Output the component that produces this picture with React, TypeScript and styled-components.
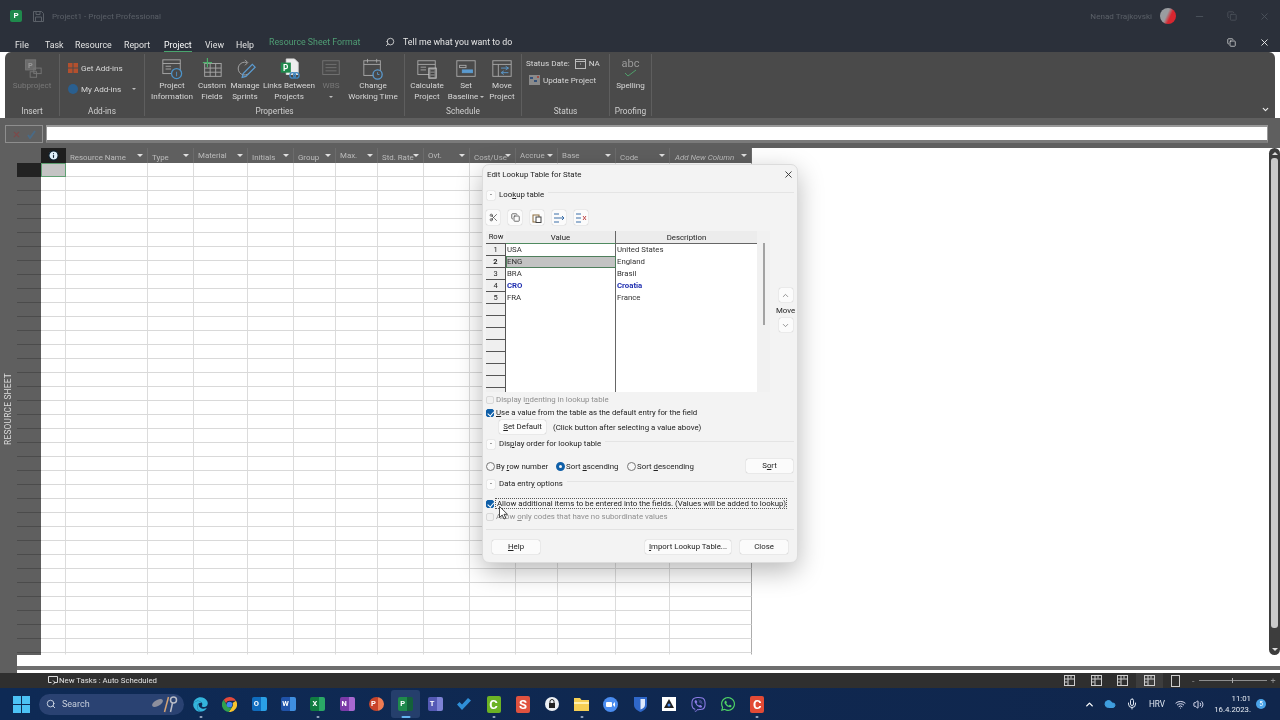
import { ReactNode } from 'react';
import styled, { createGlobalStyle } from 'styled-components';
import { FaEdge, FaViber, FaWhatsapp } from 'react-icons/fa';
import {
  ChevronDown,
  ChevronUp,
  Cloud,
  Copy,
  Info,
  Mic,
  Minus,
  Scissors,
  Search,
  Volume2,
  Wifi,
  X,
} from 'lucide-react';

const GlobalStyle = createGlobalStyle`
  html, body { margin: 0; padding: 0; background: #fff; }
  * { box-sizing: border-box; }
  body { font-family: Roboto, "Liberation Sans", Arial, sans-serif; }
`;

const columns = [
  { w: 82, label: 'Resource Name', x: 4 },
  { w: 46, label: 'Type', x: 4 },
  { w: 54, label: 'Material', x: 4, top: true },
  { w: 46, label: 'Initials', x: 4 },
  { w: 42, label: 'Group', x: 4 },
  { w: 42, label: 'Max.', x: 4, top: true },
  { w: 46, label: 'Std. Rate', x: 4 },
  { w: 46, label: 'Ovt.', x: 4, top: true },
  { w: 46, label: 'Cost/Use', x: 4 },
  { w: 42, label: 'Accrue', x: 4, top: true },
  { w: 58, label: 'Base', x: 4, top: true },
  { w: 54, label: 'Code', x: 4 },
  { w: 82, label: 'Add New Column', x: 5, italic: true },
];

const lookups = [
  { row: '1', value: 'USA', text: 'United States' },
  { row: '2', value: 'ENG', text: 'England', active: true },
  { row: '3', value: 'BRA', text: 'Brasil' },
  { row: '4', value: 'CRO', text: 'Croatia', changed: true },
  { row: '5', value: 'FRA', text: 'France' },
  ...Array.from({ length: 8 }, () => ({ row: '', value: '', text: '' })),
];

const menus = [
  { label: 'File', w: 30 },
  { label: 'Task', w: 30 },
  { label: 'Resource', w: 49 },
  { label: 'Report', w: 40 },
  { label: 'Project', w: 41 },
  { label: 'View', w: 31 },
  { label: 'Help', w: 33 },
];

const LargeIcon = ({ kind }: { kind: string }) => {
  const s = '#a9a9a9';
  return (
    <svg width="22" height="22" viewBox="0 0 24 24" fill="none" stroke={s} strokeWidth="1">
      {kind === 'sub' && (
        <>
          <rect x="5" y="2" width="11" height="11" fill="#6b6b6b" stroke="#777" />
          <text x="7.5" y="11" fontSize="8" fontWeight="700" fill="#999" stroke="none">P</text>
          <rect x="14" y="11" width="8" height="6" stroke="#777" />
          <rect x="10" y="15" width="7" height="6" stroke="#777" />
        </>
      )}
      {kind === 'info' && (
        <>
          <rect x="2" y="2" width="19" height="15" />
          <path d="M2 6h19M5 9h6M5 12h6" />
          <circle cx="17" cy="17" r="5.5" fill="#484848" stroke="#4d93c8" strokeWidth="1.4" />
          <path d="M17 15v5" stroke="#4d93c8" />
        </>
      )}
      {kind === 'fields' && (
        <>
          <rect x="4" y="6" width="18" height="14" />
          <path d="M4 11h18M4 15.500h18M10 6v14M16 6v14" />
          <path d="M7 0v10M2 5h10" stroke="#4caf6a" strokeWidth="1.3" />
        </>
      )}
      {kind === 'sprints' && (
        <>
          <path d="M14 5a7 7 0 1 0 3 11" />
          <path d="M12 2l3 3-3 3" />
          <path d="M9 21l1-4L20 7l3 3-10 10z" stroke="#5b9bd0" strokeWidth="1.4" />
        </>
      )}
      {kind === 'links' && (
        <>
          <path d="M9 1h9l4 4v13H9z" fill="#eee" stroke="#ddd" />
          <rect x="3" y="5" width="11" height="11" fill="#1f8a4c" stroke="none" />
          <text x="5.500" y="14" fontSize="9" fontWeight="700" fill="#fff" stroke="none">P</text>
          <circle cx="16" cy="19" r="3" stroke="#3f84bd" strokeWidth="1.5" />
          <circle cx="20" cy="19" r="3" stroke="#3f84bd" strokeWidth="1.5" />
        </>
      )}
      {kind === 'wbs' && (
        <>
          <rect x="3" y="3" width="18" height="15" stroke="#737373" />
          <path d="M6 7h12M6 10.500h12M6 14h12" stroke="#737373" />
        </>
      )}
      {kind === 'time' && (
        <>
          <rect x="2" y="3" width="18" height="16" />
          <path d="M2 7h18M6 1v4M16 1v4" />
          <circle cx="17" cy="18" r="5" fill="#484848" stroke="#5b9bd0" strokeWidth="1.4" />
          <path d="M17 15.500V18h2" stroke="#5b9bd0" />
        </>
      )}
      {kind === 'calc' && (
        <>
          <rect x="2" y="3" width="19" height="15" />
          <path d="M2 7h19M5 10h6M5 13h6" />
          <rect x="14" y="11" width="8" height="11" fill="#777" stroke="#ccc" />
          <path d="M16 14h4M16 17h4M16 20h4" stroke="#333" />
        </>
      )}
      {kind === 'baseline' && (
        <>
          <rect x="2" y="3" width="20" height="17" />
          <rect x="5" y="8" width="7" height="2.500" />
          <rect x="8" y="13" width="11" height="3" fill="#5b9bd0" stroke="#5b9bd0" />
        </>
      )}
      {kind === 'move' && (
        <>
          <rect x="2" y="3" width="20" height="17" />
          <path d="M2 7h20M8 7v13" />
          <path d="M11 11h8M16 9l3 2-3 2" stroke="#5b9bd0" />
          <path d="M19 16h-7M14 14l-3 2 3 2" stroke="#5b9bd0" />
        </>
      )}
    </svg>
  );
};

const Mnemonic = styled.u`
  text-decoration-thickness: 1px;
`;

const SectionTitle = ({ children }: { children: ReactNode }) => (
  <SectionHead>
    <Collapse>-</Collapse>
    <SectionLabel>{children}</SectionLabel>
    <SectionRule />
  </SectionHead>
);

const App = () => {
  return (
    <Page>
      <GlobalStyle />
      <TitleBar>
        <AppLogo>P</AppLogo>
        <svg width="11" height="11" viewBox="0 0 11 11" fill="none" stroke="#5b6068">
          <path d="M.5.5h8l2 2v8H.5z" />
          <path d="M3 .5v3h4v-3M2.500 10.500V6h6v4.500" />
        </svg>
        <TitleText>Project1 - Project Professional</TitleText>
        <TitleSpacer />
        <TitleText>Nenad Trajkovski</TitleText>
        <Avatar />
        <WindowIcons>
          <Minus size={11} color="#4d535c" />
          <Copy size={10} color="#4d535c" />
          <X size={11} color="#4d535c" />
        </WindowIcons>
      </TitleBar>

      <MenuBar>
        {menus.map((m) => (
          <MenuItem key={m.label} $w={m.w}>
            <MenuLabel $active={m.label === 'Project'}>{m.label}</MenuLabel>
          </MenuItem>
        ))}
        <ContextTab>Resource Sheet Format</ContextTab>
        <Search size={10} color="#ddd" style={{ transform: 'scaleX(-1)' }} />
        <TellMe>Tell me what you want to do</TellMe>
        <TitleSpacer />
        <Copy size={9} color="#ddd" />
        <X size={11} color="#eee" style={{ marginLeft: 23, marginRight: 10 }} />
      </MenuBar>

      <Ribbon>
        <Group $w={55}>
          <GroupBody>
            <LargeButton $w={54} $off>
              <LargeIcon kind="sub" />
              <span>Subproject</span>
            </LargeButton>
          </GroupBody>
          <GroupLabel>Insert</GroupLabel>
        </Group>
        <Group $w={85}>
          <GroupStack $pad={8} $top={6}>
            <SmallButton>
              <svg width="10" height="10" viewBox="0 0 10 10">
                <path d="M0 0h4.500v4.500H0zM5.500 0H10v4.500H5.500zM0 5.500h4.500V10H0zM5.500 5.500H10V10H5.500z" fill="#b3502e" />
              </svg>
              <span>Get Add-ins</span>
            </SmallButton>
            <SmallButton>
              <svg width="10" height="10" viewBox="0 0 10 10">
                <circle cx="5" cy="5" r="5" fill="#2a5f8f" />
              </svg>
              <span>My Add-ins</span>
              <Caret $gap={8} />
            </SmallButton>
          </GroupStack>
          <GroupLabel>Add-ins</GroupLabel>
        </Group>
        <Group $w={260}>
          <GroupBody $pad={4}>
            <LargeButton $w={46}>
              <LargeIcon kind="info" />
              <span>
                Project
                <br />
                Information
              </span>
            </LargeButton>
            <LargeButton $w={34}>
              <LargeIcon kind="fields" />
              <span>
                Custom
                <br />
                Fields
              </span>
            </LargeButton>
            <LargeButton $w={32}>
              <LargeIcon kind="sprints" />
              <span>
                Manage
                <br />
                Sprints
              </span>
            </LargeButton>
            <LargeButton $w={56}>
              <LargeIcon kind="links" />
              <span>
                Links Between
                <br />
                Projects
              </span>
            </LargeButton>
            <LargeButton $w={28} $off>
              <LargeIcon kind="wbs" />
              <span>WBS</span>
              <Caret $below />
            </LargeButton>
            <LargeButton $w={56}>
              <LargeIcon kind="time" />
              <span>
                Change
                <br />
                Working Time
              </span>
            </LargeButton>
          </GroupBody>
          <GroupLabel>Properties</GroupLabel>
        </Group>
        <Group $w={117}>
          <GroupBody>
            <LargeButton $w={44}>
              <LargeIcon kind="calc" />
              <span>
                Calculate
                <br />
                Project
              </span>
            </LargeButton>
            <LargeButton $w={34}>
              <LargeIcon kind="baseline" />
              <span>
                Set
                <br />
                Baseline&nbsp;<Caret $inline />
              </span>
            </LargeButton>
            <LargeButton $w={38}>
              <LargeIcon kind="move" />
              <span>
                Move
                <br />
                Project
              </span>
            </LargeButton>
          </GroupBody>
          <GroupLabel>Schedule</GroupLabel>
        </Group>
        <Group $w={88}>
          <GroupStack $pad={4} $top={1}>
            <SmallButton>
              <span>Status Date:</span>
              <svg width="11" height="11" viewBox="0 0 11 11" fill="none" stroke="#bbb" style={{ marginLeft: 2 }}>
                <rect x=".5" y="1.500" width="10" height="9" />
                <path d="M.5 3.500h10M5 6h1" />
              </svg>
              <span>NA</span>
            </SmallButton>
            <SmallButton $top={-4} $x={3}>
              <svg width="11" height="10" viewBox="0 0 11 10">
                <rect width="11" height="10" fill="#8b8b8b" />
                <path d="M1 2h3v2H1zM5 5h3v2H5z" fill="#35527a" />
                <path d="M8 1h2v2H8z" fill="#a14e45" />
              </svg>
              <span>Update Project</span>
            </SmallButton>
          </GroupStack>
          <GroupLabel>Status</GroupLabel>
        </Group>
        <Group $w={42}>
          <GroupBody>
            <LargeButton $w={41}>
              <AbcMark>abc</AbcMark>
              <SpellTick width="14" height="8" viewBox="0 0 14 8" fill="none" stroke="#4fa06a">
                <path d="M1 4l3 3 8-6" />
              </SpellTick>
              <span>Spelling</span>
            </LargeButton>
          </GroupBody>
          <GroupLabel>Proofing</GroupLabel>
        </Group>
        <RibbonCollapse>
          <ChevronDown size={9} color="#eee" strokeWidth={3} />
        </RibbonCollapse>
      </Ribbon>

      <FormulaBar>
        <EntryButtons>
          <X size={9} color="#7d4a4a" strokeWidth={3} />
          <svg width="9" height="9" viewBox="0 0 9 9" fill="none" stroke="#4a6a85" strokeWidth="2">
            <path d="M1 5l2 3 5-7" />
          </svg>
        </EntryButtons>
        <EntryInput />
      </FormulaBar>

      <Sheet>
        <SheetLabel>RESOURCE SHEET</SheetLabel>
        <SheetMain>
          <GridArea>
            <HeaderRow>
              <Gutter />
              <IndicatorHead>
                <Info size={11} color="#0d2130" fill="#dff0fb" strokeWidth={2.4} />
              </IndicatorHead>
              {columns.map((c) => (
                <HeaderCell key={c.label} $w={c.w} $top={c.top} $x={c.x} $italic={c.italic}>
                  <HeaderText>{c.label}</HeaderText>
                  <HeaderArrow />
                </HeaderCell>
              ))}
            </HeaderRow>
            {Array.from({ length: 36 }, (_, r) => (
              <GridRow key={r} $short={r === 35}>
                <RowGutter>
                  <RowMark $on={r === 0} $hidden={r === 35} />
                </RowGutter>
                <GridCell $w={25} $selected={r === 0} $noLine={r === 35} />
                {columns.map((c) => (
                  <GridCell key={c.label} $w={c.w} $noLine={r === 35} $edge={c.italic} />
                ))}
              </GridRow>
            ))}
            <SheetFoot />
          </GridArea>
          <ScrollBar>
            <ScrollArrow $up />
            <ScrollThumb />
            <ScrollArrow />
          </ScrollBar>
        </SheetMain>
      </Sheet>

      <HorizontalBar />

      <StatusBar>
        <svg width="10" height="9" viewBox="0 0 10 9" fill="none" stroke="#ddd">
          <path d="M.5.500h9v6H6M.5.500v6h3" />
          <path d="M5 4.500l2 2-2 2" />
        </svg>
        <StatusText>New Tasks : Auto Scheduled</StatusText>
        <TitleSpacer />
        {[0, 1, 2, 3].map((i) => (
          <ViewIcon key={i} $on={i === 3}>
            <svg width="11" height="11" viewBox="0 0 11 11" fill="none" stroke="#cfcfcf">
              <rect x=".5" y=".5" width="10" height="10" />
              <path d="M.5 4h10M4 .5v10M7 .5v3M.5 7h3" />
            </svg>
          </ViewIcon>
        ))}
        <ViewIcon>
          <svg width="9" height="12" viewBox="0 0 9 12" fill="none" stroke="#cfcfcf">
            <rect x=".5" y=".5" width="8" height="11" />
          </svg>
        </ViewIcon>
        <ZoomSlider>
          <ZoomGlyph>-</ZoomGlyph>
          <ZoomTrack>
            <ZoomTick />
          </ZoomTrack>
          <ZoomGlyph>+</ZoomGlyph>
        </ZoomSlider>
      </StatusBar>

      <Taskbar>
        <StartButton>
          <svg width="17" height="17" viewBox="0 0 17 17">
            <path d="M0 0h8v8H0zM9 0h8v8H9zM0 9h8v8H0zM9 9h8v8H9z" fill="#4cc2f5" />
          </svg>
        </StartButton>
        <SearchPill>
          <Search size={10} color="#dfe6f0" />
          <SearchText>Search</SearchText>
          <TitleSpacer />
          <svg width="31" height="18" viewBox="0 0 26 18" fill="none">
            <ellipse cx="6" cy="8" rx="6" ry="3" fill="#8d8f9d" transform="rotate(-30 6 8)" />
            <path d="M13 17L17 2" stroke="#d6a475" strokeWidth="1.5" />
            <circle cx="22" cy="5" r="3" stroke="#b9bcc7" strokeWidth="1.5" />
            <path d="M21 8l-2 9" stroke="#b9bcc7" strokeWidth="1.5" />
          </svg>
        </SearchPill>
        <TaskIcons>
          <TaskSlot $dot>
            <FaEdge size={15} color="#33b5dc" />
          </TaskSlot>
          <TaskSlot>
            <svg width="15" height="15" viewBox="0 0 20 20">
              <path d="M10 0a10 10 0 0 1 8.660 5H10a5 5 0 0 0-4.700 3.300L2.300 3.500A10 10 0 0 1 10 0z" fill="#e2493b" />
              <path d="M18.660 5A10 10 0 0 1 9 20l4.300-6.500A5 5 0 0 0 14 8z" fill="#f7c32e" />
              <path d="M9 20A10 10 0 0 1 2.300 3.500L6 10a5 5 0 0 0 7.300 3.500z" fill="#2fa14f" />
              <circle cx="10" cy="10" r="3.800" fill="#4285f4" />
            </svg>
          </TaskSlot>
          <TaskSlot>
            <AppTile $bg="#0f6cbd" $accent="#2aa0e6">O</AppTile>
          </TaskSlot>
          <TaskSlot>
            <AppTile $bg="#1f52a8" $accent="#3f8fe0">W</AppTile>
          </TaskSlot>
          <TaskSlot $dot>
            <AppTile $bg="#107c41" $accent="#2aa866">X</AppTile>
          </TaskSlot>
          <TaskSlot>
            <AppTile $bg="#7b3aa8" $accent="#a868d0">N</AppTile>
          </TaskSlot>
          <TaskSlot>
            <AppTile $bg="#c8442a" $accent="#ee7b52" $round>P</AppTile>
          </TaskSlot>
          <TaskSlot $active>
            <AppTile $bg="#1f8a4c" $accent="#14613a">P</AppTile>
          </TaskSlot>
          <TaskSlot>
            <AppTile $bg="#5459b5" $accent="#7d82d6">T</AppTile>
          </TaskSlot>
          <TaskSlot>
            <svg width="14" height="12" viewBox="0 0 14 12">
              <path d="M0 6.500L2.500 4l2.500 2.500L11 0l3 2.500L5 12z" fill="#2f8fd8" />
            </svg>
          </TaskSlot>
          <TaskSlot $dot>
            <LetterBadge $bg="#6cb324">C</LetterBadge>
          </TaskSlot>
          <TaskSlot>
            <LetterBadge $bg="#e0523f">S</LetterBadge>
          </TaskSlot>
          <TaskSlot>
            <svg width="14" height="14" viewBox="0 0 14 14">
              <circle cx="7" cy="7" r="7" fill="#edf0f4" />
              <rect x="4" y="6" width="6" height="5" fill="#222" />
              <path d="M5 6V4.500a2 2 0 0 1 4 0V6" fill="none" stroke="#222" />
            </svg>
          </TaskSlot>
          <TaskSlot $dot>
            <svg width="15" height="13" viewBox="0 0 15 13">
              <path d="M0 0h6l1.500 2H15v11H0z" fill="#f6cf54" />
              <path d="M0 4h15v2H0z" fill="#fff0b0" />
            </svg>
          </TaskSlot>
          <TaskSlot>
            <svg width="15" height="15" viewBox="0 0 15 15">
              <circle cx="7.500" cy="7.500" r="7.500" fill="#4a8cf0" />
              <rect x="3" y="5" width="6" height="5" rx="1" fill="#fff" />
              <path d="M10 7l2-2v5l-2-2z" fill="#fff" />
            </svg>
          </TaskSlot>
          <TaskSlot>
            <svg width="13" height="15" viewBox="0 0 13 15">
              <path d="M0 0h13v8c0 3.500-3 5.500-6.500 7C3 13.500 0 11.500 0 8z" fill="#2f67c9" />
              <path d="M6.500 2H11v6c0 2-2 3.500-4.500 4.500z" fill="#dfe9fb" />
            </svg>
          </TaskSlot>
          <TaskSlot>
            <svg width="14" height="14" viewBox="0 0 14 14">
              <rect width="14" height="14" fill="#fff" />
              <path d="M7 2l5 9H2z" fill="#222" />
              <circle cx="7" cy="8" r="1.500" fill="#4a8cf0" />
            </svg>
          </TaskSlot>
          <TaskSlot>
            <FaViber size={15} color="#8c7ce6" />
          </TaskSlot>
          <TaskSlot>
            <FaWhatsapp size={16} color="#4fd465" />
          </TaskSlot>
          <TaskSlot $dot>
            <LetterBadge $bg="#e24a35">C</LetterBadge>
          </TaskSlot>
        </TaskIcons>
        <TitleSpacer />
        <Tray>
          <TraySlot $w={22}>
            <ChevronUp size={11} color="#fff" strokeWidth={3} />
          </TraySlot>
          <TraySlot $w={20}>
            <Cloud size={12} color="#3f9ede" fill="#3f9ede" />
          </TraySlot>
          <TraySlot $w={24}>
            <Mic size={12} color="#dfe6f0" />
          </TraySlot>
          <TraySlot $w={26}>HRV</TraySlot>
          <TraySlot $w={20}>
            <Wifi size={11} color="#eef" />
          </TraySlot>
          <TraySlot $w={16}>
            <Volume2 size={11} color="#eef" />
          </TraySlot>
          <Clock>
            <span>11:01</span>
            <span>16.4.2023.</span>
          </Clock>
          <Badge>5</Badge>
        </Tray>
      </Taskbar>

      <Dialog>
        <DialogTitle>
          <span>Edit Lookup Table for State</span>
          <X size={11} color="#333" />
        </DialogTitle>
        <SectionTitle>
          Loo<Mnemonic>k</Mnemonic>up table
        </SectionTitle>
        <ToolRow>
          <ToolButton>
            <Scissors size={9} color="#444" />
          </ToolButton>
          <ToolButton>
            <Copy size={9} color="#444" />
          </ToolButton>
          <ToolButton>
            <svg width="10" height="10" viewBox="0 0 10 10" fill="none" stroke="#8a6a3a">
              <rect x="1" y="2" width="6" height="7" />
              <rect x="4" y="4" width="5" height="5.500" stroke="#444" fill="#fff" />
            </svg>
          </ToolButton>
          <ToolButton>
            <svg width="11" height="10" viewBox="0 0 11 10" fill="none" stroke="#3a6ea8">
              <path d="M0 1h5M0 5h5M0 9h5M5 5h5M8 3l2 2-2 2" />
            </svg>
          </ToolButton>
          <ToolButton>
            <svg width="11" height="10" viewBox="0 0 11 10" fill="none" stroke="#3a6ea8">
              <path d="M0 1h5M0 5h5M0 9h5" />
              <path d="M7 3l3 4M10 3L7 7" stroke="#c04b4b" />
            </svg>
          </ToolButton>
        </ToolRow>
        <TableArea>
          <LookupTable>
            <LookupHead>
              <LookupRowHead $corner>Row</LookupRowHead>
              <LookupHeadCell $w={110} $green>Value</LookupHeadCell>
              <LookupHeadCell $w={142}>Description</LookupHeadCell>
            </LookupHead>
            {lookups.map((l, i) => (
              <LookupRow key={i}>
                <LookupRowHead $active={l.active}>{l.row}</LookupRowHead>
                <LookupCell $w={110} $active={l.active} $changed={l.changed}>
                  {l.value}
                </LookupCell>
                <LookupCell $w={142} $changed={l.changed}>
                  {l.text}
                </LookupCell>
              </LookupRow>
            ))}
            <TableScroll>
              <TableThumb />
            </TableScroll>
          </LookupTable>
          <MoveColumn>
            <MoveButton>
              <ChevronUp size={9} color="#777" />
            </MoveButton>
            <MoveLabel>Move</MoveLabel>
            <MoveButton>
              <ChevronDown size={9} color="#777" />
            </MoveButton>
          </MoveColumn>
        </TableArea>

        <CheckRow $off>
          <Check $off />
          <span>
            Display i<Mnemonic>n</Mnemonic>denting in lookup table
          </span>
        </CheckRow>
        <CheckRow>
          <Check $on />
          <span>
            <Mnemonic>U</Mnemonic>se a value from the table as the default entry for the field
          </span>
        </CheckRow>
        <DefaultRow>
          <PushButton $w={47}>
            <Mnemonic>S</Mnemonic>et Default
          </PushButton>
          <span>(Click button after selecting a value above)</span>
        </DefaultRow>
        <SectionTitle>
          Dis<Mnemonic>p</Mnemonic>lay order for lookup table
        </SectionTitle>
        <RadioRow>
          <Radio />
          <RadioLabel $w={61}>
            By <Mnemonic>r</Mnemonic>ow number
          </RadioLabel>
          <Radio $on />
          <RadioLabel $w={62}>
            Sort <Mnemonic>a</Mnemonic>scending
          </RadioLabel>
          <Radio />
          <RadioLabel $w={110}>
            Sort <Mnemonic>d</Mnemonic>escending
          </RadioLabel>
          <PushButton $w={47}>
            S<Mnemonic>o</Mnemonic>rt
          </PushButton>
        </RadioRow>
        <SectionGap $h={1} />
        <SectionTitle>
          Data entr<Mnemonic>y</Mnemonic> options
        </SectionTitle>
        <SectionGap $h={7} />
        <CheckRow>
          <Check $on />
          <FocusLabel>Allow additional items to be entered into the fields. (Values will be added to lookup)</FocusLabel>
        </CheckRow>
        <CheckRow $off>
          <Check $off />
          <span>
            Allow <Mnemonic>o</Mnemonic>nly codes that have no subordinate values
          </span>
        </CheckRow>
        <DialogRule />
        <DialogFooter>
          <PushButton $w={48}>
            <Mnemonic>H</Mnemonic>elp
          </PushButton>
          <TitleSpacer />
          <PushButton $w={86}>
            <Mnemonic>I</Mnemonic>mport Lookup Table...
          </PushButton>
          <PushButton $w={48}>Close</PushButton>
        </DialogFooter>
        <Pointer width="9" height="14" viewBox="0 0 9 14">
          <path d="M.5.500v11l2.700-2.500 1.800 4 1.800-.8-1.800-3.900H8.500z" fill="#fff" stroke="#222" strokeWidth=".8" />
        </Pointer>
      </Dialog>
    </Page>
  );
};

const Page = styled.div`
  position: relative;
  width: 1280px;
  height: 720px;
  overflow: hidden;
  display: flex;
  flex-direction: column;
  background: #fff;
  filter: blur(0.3px);
`;

const TitleBar = styled.header`
  height: 30px;
  flex: none;
  display: flex;
  align-items: center;
  gap: 8px;
  padding: 2px 0 0 10px;
  background: #2b303a;
`;

const AppLogo = styled.span`
  width: 12px;
  height: 12px;
  margin-right: 3px;
  border-radius: 2px;
  background: #1f8a4c;
  color: #fff;
  font-size: 8px;
  font-weight: 700;
  line-height: 12px;
  text-align: center;
`;

const TitleText = styled.span`
  font-size: 8.1px;
  color: #5b6068;
`;

const TitleSpacer = styled.span`
  flex: 1;
`;

const Avatar = styled.span`
  width: 16px;
  height: 16px;
  border-radius: 50%;
  background: linear-gradient(115deg, #9a9ca0 0 42%, #d8262f 62%);
`;

const WindowIcons = styled.span`
  width: 96px;
  display: flex;
  justify-content: space-between;
  padding: 0 10px 0 10px;
`;

const MenuBar = styled.nav`
  height: 22px;
  flex: none;
  display: flex;
  align-items: center;
  padding: 2px 0 0 15px;
  background: #2b303a;
`;

const MenuItem = styled.span<{ $w: number }>`
  width: ${(p) => p.$w}px;
  flex: none;
`;

const MenuLabel = styled.span<{ $active?: boolean }>`
  padding: 3px 0 1px;
  font-size: 8.8px;
  color: ${(p) => (p.$active ? '#fff' : '#e3e3e3')};
  border-bottom: 1px solid ${(p) => (p.$active ? '#49a56e' : 'transparent')};
`;

const ContextTab = styled.span`
  width: 116px;
  font-size: 8.8px;
  color: #4f9d74;
`;

const TellMe = styled.span`
  margin-left: 8px;
  font-size: 8.8px;
  color: #e6e6e6;
`;

const Ribbon = styled.section`
  position: relative;
  height: 66px;
  flex: none;
  display: flex;
  margin: 0 5px;
  padding-top: 2px;
  border-radius: 6px 6px 0 0;
  background: #4a4a4a;
`;

const Group = styled.div<{ $w: number }>`
  width: ${(p) => p.$w}px;
  height: 62px;
  flex: none;
  display: flex;
  flex-direction: column;
  border-right: 1px solid #5e5e5e;
`;

const GroupBody = styled.div<{ $pad?: number }>`
  height: 52px;
  display: flex;
  padding-left: ${(p) => p.$pad ?? 0}px;
`;

const GroupStack = styled.div<{ $pad: number; $top: number }>`
  height: 52px;
  display: flex;
  flex-direction: column;
  gap: 5px;
  padding: ${(p) => p.$top}px 0 0 ${(p) => p.$pad}px;
`;

const GroupLabel = styled.div`
  margin-top: 2px;
  text-align: center;
  font-size: 8.3px;
  color: #cfcfcf;
`;

const LargeButton = styled.div<{ $w: number; $off?: boolean }>`
  width: ${(p) => p.$w}px;
  flex: none;
  display: flex;
  flex-direction: column;
  align-items: center;
  padding-top: 4px;
  font-size: 8.1px;
  line-height: 11px;
  text-align: center;
  white-space: nowrap;
  color: ${(p) => (p.$off ? '#787878' : '#d8d8d8')};
`;

const SmallButton = styled.div<{ $top?: number; $x?: number }>`
  height: 16px;
  display: flex;
  align-items: center;
  gap: 3px;
  margin-top: ${(p) => p.$top ?? 0}px;
  padding-left: ${(p) => p.$x ?? 0}px;
  font-size: 8.1px;
  white-space: nowrap;
  color: #d8d8d8;
`;

const Caret = styled.i<{ $gap?: number; $inline?: boolean; $below?: boolean }>`
  display: ${(p) => (p.$inline ? 'inline-block' : 'block')};
  width: 0;
  height: 0;
  margin-left: ${(p) => p.$gap ?? 0}px;
  margin-top: ${(p) => (p.$below ? 5 : 0)}px;
  vertical-align: middle;
  border: 2.5px solid transparent;
  border-top-color: #bdbdbd;
  border-bottom-width: 0;
`;

const AbcMark = styled.span`
  font-size: 11px;
  line-height: 11px;
  color: #9a9a9a;
`;

const SpellTick = styled.svg`
  margin-bottom: 3px;
`;

const RibbonCollapse = styled.span`
  position: absolute;
  right: 5px;
  bottom: 4px;
  display: flex;
`;

const FormulaBar = styled.div`
  height: 30px;
  flex: none;
  display: flex;
  gap: 3px;
  padding: 7px 12px 5px 5px;
  background: #5f5f5f;
`;

const EntryButtons = styled.div`
  width: 38px;
  display: flex;
  align-items: center;
  justify-content: space-evenly;
  border: 1px solid #8e8e8e;
`;

const EntryInput = styled.div`
  flex: 1;
  background: #fff;
  border: 1px solid #999;
  border-top-width: 2px;
  border-bottom: 3px solid #7a7a7a;
`;

const Sheet = styled.div`
  position: relative;
  height: 518px;
  flex: none;
  display: flex;
  flex-direction: column;
`;

const SheetLabel = styled.div`
  position: absolute;
  left: 3px;
  top: 225px;
  writing-mode: vertical-rl;
  transform: rotate(180deg);
  font-size: 8.4px;
  line-height: 11px;
  letter-spacing: 0.2px;
  color: #ddd;
  z-index: 1;
`;

const SheetMain = styled.div`
  display: flex;
  justify-content: space-between;
`;

const GridArea = styled.div`
  width: 752px;
  display: flex;
  flex-direction: column;
`;

const HeaderRow = styled.div`
  height: 15px;
  display: flex;
  background: #5f5f5f;
  width: 752px;
`;

const Gutter = styled.div`
  width: 41px;
  flex: none;
  background: #5f5f5f;
`;

const IndicatorHead = styled.div`
  width: 25px;
  flex: none;
  display: flex;
  align-items: center;
  justify-content: center;
  background: #1e1e1e;
`;

const HeaderCell = styled.div<{ $w: number; $top?: boolean; $x: number; $italic?: boolean }>`
  width: ${(p) => p.$w}px;
  flex: none;
  position: relative;
  padding: ${(p) => (p.$top ? '2px' : '4px')} 0 0 ${(p) => p.$x}px;
  font-size: 7.9px;
  font-style: ${(p) => (p.$italic ? 'italic' : 'normal')};
  line-height: 11px;
  white-space: nowrap;
  color: #bcbcbc;
  border-right: 1px solid #6c6c6c;
`;

const HeaderText = styled.span`
  display: block;
`;

const HeaderArrow = styled.i`
  position: absolute;
  right: 4px;
  top: 6px;
  width: 0;
  height: 0;
  border: 3px solid transparent;
  border-top-color: #e0e0e0;
  border-bottom-width: 0;
`;

const GridRow = styled.div<{ $short?: boolean }>`
  height: ${(p) => (p.$short ? 2 : 14)}px;
  display: flex;
`;

const RowGutter = styled.div`
  width: 41px;
  flex: none;
  display: flex;
  justify-content: flex-end;
  background: #5f5f5f;
`;

const RowMark = styled.div<{ $on?: boolean; $hidden?: boolean }>`
  width: 24px;
  background: ${(p) => (p.$on ? '#222' : 'transparent')};
  border-bottom: 1px solid ${(p) => (p.$hidden ? 'transparent' : p.$on ? '#222' : '#4b4b4b')};
`;

const GridCell = styled.div<{ $w: number; $selected?: boolean; $noLine?: boolean; $edge?: boolean }>`
  width: ${(p) => p.$w}px;
  flex: none;
  background: ${(p) => (p.$selected ? '#c4c4c4' : '#fff')};
  border-right: 1px solid ${(p) => (p.$edge ? '#ababab' : '#dcdcdc')};
  border-bottom: 1px solid ${(p) => (p.$noLine ? 'transparent' : '#d9d9d9')};
  outline: ${(p) => (p.$selected ? '1px solid #5f9f72' : 'none')};
  outline-offset: -1px;
`;

const SheetFoot = styled.div`
  height: 11px;
  border-left: 17px solid #5f5f5f;
  background: #fff;
`;

const ScrollBar = styled.div`
  width: 11px;
  height: 507px;
  display: flex;
  flex-direction: column;
  align-items: center;
  border-radius: 6px;
  background: #3d3d3d;
`;

const ScrollArrow = styled.i<{ $up?: boolean }>`
  flex: none;
  width: 0;
  height: 0;
  margin: ${(p) => (p.$up ? '4px 0 3px' : '20px 0 4px')};
  border: 3.5px solid transparent;
  ${(p) => (p.$up ? 'border-bottom-color: #ddd; border-top-width: 0;' : 'border-top-color: #ddd; border-bottom-width: 0;')}
`;

const ScrollThumb = styled.div`
  width: 7px;
  flex: 1;
  border-radius: 3px;
  background: #c9c9c9;
`;

const HorizontalBar = styled.div`
  height: 7px;
  flex: none;
  background: linear-gradient(#6e6e6e 0 4px, #fff 4px);
  border-left: 17px solid #5f5f5f;
`;

const StatusBar = styled.footer`
  height: 15px;
  flex: none;
  display: flex;
  align-items: center;
  padding-left: 48px;
  background: #2f2f2f;
`;

const StatusText = styled.span`
  margin-left: 1px;
  font-size: 7.8px;
  color: #e0e0e0;
`;

const ViewIcon = styled.span<{ $on?: boolean }>`
  width: 26.5px;
  height: 15px;
  display: flex;
  align-items: center;
  justify-content: center;
  background: ${(p) => (p.$on ? '#3d3d3d' : 'transparent')};
`;

const ZoomSlider = styled.div`
  width: 91px;
  display: flex;
  align-items: center;
  gap: 4px;
  padding-left: 3px;
`;

const ZoomGlyph = styled.span`
  font-size: 9px;
  color: #8d8d8d;
`;

const ZoomTrack = styled.div`
  position: relative;
  width: 68px;
  height: 1px;
  background: #8d8d8d;
`;

const ZoomTick = styled.i`
  position: absolute;
  left: 33px;
  top: -2px;
  width: 1px;
  height: 5px;
  background: #aaa;
`;

const Taskbar = styled.footer`
  height: 32px;
  flex: none;
  display: flex;
  align-items: center;
  padding-left: 13px;
  background: linear-gradient(90deg, #0e2a55, #10264c);
`;

const StartButton = styled.div`
  width: 17px;
  display: flex;
`;

const SearchPill = styled.div`
  width: 145px;
  height: 21px;
  flex: none;
  display: flex;
  align-items: center;
  margin-left: 9px;
  padding: 0 4px 0 7px;
  border-radius: 11px;
  background: #2a4272;
`;

const SearchText = styled.span`
  margin-left: 6px;
  font-size: 9px;
  color: #c7cfdc;
`;

const TaskIcons = styled.div`
  display: flex;
  margin-left: 2px;
`;

const TaskSlot = styled.div<{ $active?: boolean; $dot?: boolean }>`
  position: relative;
  width: 29.3px;
  height: 28px;
  display: flex;
  align-items: center;
  justify-content: center;
  border-radius: 3px;
  background: ${(p) => (p.$active ? '#253f6c' : 'transparent')};

  &::after {
    content: '';
    position: absolute;
    bottom: 0;
    left: 50%;
    width: ${(p) => (p.$active ? '9px' : '3px')};
    height: 2px;
    transform: translateX(-50%);
    border-radius: 1px;
    background: ${(p) => (p.$active ? '#64b5f0' : p.$dot ? '#93a3bd' : 'transparent')};
  }
`;

const AppTile = styled.span<{ $bg: string; $accent: string; $round?: boolean }>`
  width: 15px;
  height: 14px;
  padding-right: 6px;
  border-radius: ${(p) => (p.$round ? '50%' : '2px')};
  background: linear-gradient(90deg, ${(p) => p.$bg} 58%, ${(p) => p.$accent} 58%);
  color: #fff;
  font-size: 7.5px;
  font-weight: 700;
  line-height: 14px;
  text-align: center;
`;

const LetterBadge = styled.span<{ $bg: string }>`
  width: 14px;
  height: 17px;
  border-radius: 2px;
  background: ${(p) => p.$bg};
  color: #fff;
  font-size: 13px;
  font-weight: 700;
  line-height: 17px;
  text-align: center;
`;

const Tray = styled.div`
  display: flex;
  align-items: center;
  padding-right: 14px;
`;

const TraySlot = styled.div<{ $w: number }>`
  width: ${(p) => p.$w}px;
  display: flex;
  justify-content: center;
  font-size: 8.2px;
  color: #dfe6f0;
`;

const Clock = styled.div`
  width: 45px;
  display: flex;
  flex-direction: column;
  align-items: flex-end;
  font-size: 7.8px;
  line-height: 11px;
  color: #e6ebf2;
`;

const Badge = styled.span`
  width: 10px;
  height: 10px;
  margin-left: 5px;
  border-radius: 50%;
  background: #4aa3e8;
  color: #fff;
  font-size: 6.5px;
  line-height: 10px;
  text-align: center;
`;

const Dialog = styled.div`
  position: absolute;
  left: 482px;
  top: 164px;
  width: 316px;
  height: 399px;
  padding: 0 3px;
  border-radius: 7px;
  background: #f3f3f3;
  border: 1px solid #dcdcdc;
  box-shadow: 0 8px 26px rgba(0, 0, 0, 0.28);
  font-size: 7.85px;
  color: #222;
`;

const DialogTitle = styled.div`
  height: 20px;
  display: flex;
  align-items: center;
  justify-content: space-between;
  padding: 0 0 2px 1px;
  font-size: 7.9px;
`;

const SectionHead = styled.div`
  height: 14px;
  display: flex;
  align-items: center;
  margin-top: 2px;
  padding-left: 1px;
`;

const Collapse = styled.span`
  width: 8px;
  height: 9px;
  margin-right: 4px;
  margin-top: 2px;
  border-radius: 1px;
  background: #fbfbfb;
  box-shadow: 0 0 1px rgba(0, 0, 0, 0.4);
  font-size: 7px;
  line-height: 8px;
  text-align: center;
`;

const SectionLabel = styled.span`
  margin-right: 4px;
  white-space: nowrap;
`;

const SectionRule = styled.span`
  flex: 1;
  height: 1px;
  margin-top: -3px;
  background: #e4e4e4;
`;

const SectionGap = styled.div<{ $h: number }>`
  height: ${(p) => p.$h}px;
`;

const ToolRow = styled.div`
  height: 15px;
  display: flex;
  gap: 8px;
  margin-top: 9px;
`;

const ToolButton = styled.span`
  width: 14px;
  height: 15px;
  display: flex;
  align-items: center;
  justify-content: center;
  border-radius: 2px;
  background: #fbfbfb;
  box-shadow: 0 0 1px rgba(0, 0, 0, 0.35);
`;

const TableArea = styled.div`
  height: 161px;
  display: flex;
  margin: 6px 0 1px;
`;

const LookupTable = styled.div`
  position: relative;
  width: 284px;
  height: 161px;
  flex: none;
  overflow: hidden;
  background: #fff;
`;

const LookupHead = styled.div`
  height: 13px;
  display: flex;
  background: #ececec;
`;

const LookupRowHead = styled.div<{ $corner?: boolean; $active?: boolean }>`
  width: 20px;
  height: ${(p) => (p.$corner ? 13 : 12)}px;
  flex: none;
  background: #efefef;
  border-bottom: 1px solid #555;
  border-right: ${(p) => (p.$corner ? '0' : '1px solid #555')};
  font-size: ${(p) => (p.$corner ? '7.6px' : '7.5px')};
  font-weight: ${(p) => (p.$active ? 700 : 400)};
  line-height: ${(p) => (p.$corner ? 12 : 11)}px;
  text-align: center;
`;

const LookupHeadCell = styled.div<{ $w: number; $green?: boolean }>`
  width: ${(p) => p.$w}px;
  flex: none;
  padding-top: 2px;
  border: 1px solid #666;
  border-width: 0 1px 1px 0;
  border-bottom-color: ${(p) => (p.$green ? '#4f8a5f' : '#666')};
  font-size: 7.8px;
  line-height: 10px;
  text-align: center;
`;

const LookupRow = styled.div`
  height: 12px;
  display: flex;
`;

const LookupCell = styled.div<{ $w: number; $active?: boolean; $changed?: boolean }>`
  width: ${(p) => p.$w}px;
  height: 12px;
  flex: none;
  padding-left: 1px;
  background: ${(p) => (p.$active ? '#c3c3c3' : 'transparent')};
  border-right: 1px solid #666;
  outline: ${(p) => (p.$active ? '1px solid #4f7f5c' : 'none')};
  outline-offset: -1px;
  color: ${(p) => (p.$changed ? '#1f2fb0' : '#333')};
  font-size: 7.8px;
  font-weight: ${(p) => (p.$changed ? 700 : 400)};
  line-height: 12px;
`;

const TableScroll = styled.div`
  position: absolute;
  right: 0;
  top: 0;
  width: 13px;
  height: 100%;
  background: #f1f1f1;
`;

const TableThumb = styled.div`
  width: 2px;
  height: 82px;
  margin: 12px 0 0 6px;
  background: #a2a2a2;
`;

const MoveColumn = styled.div`
  flex: 1;
  display: flex;
  flex-direction: column;
  align-items: center;
  padding: 57px 0 0 6px;
`;

const MoveButton = styled.div`
  width: 14px;
  height: 14px;
  display: flex;
  align-items: center;
  justify-content: center;
  border-radius: 2px;
  background: #fbfbfb;
  box-shadow: 0 0 1px rgba(0, 0, 0, 0.35);
`;

const MoveLabel = styled.div`
  margin: 3px 0 2px;
  line-height: 11px;
`;

const CheckRow = styled.div<{ $off?: boolean }>`
  height: 13px;
  display: flex;
  align-items: center;
  gap: 2px;
  white-space: nowrap;
  color: ${(p) => (p.$off ? '#8f8f8f' : '#222')};
`;

const Check = styled.span<{ $on?: boolean; $off?: boolean }>`
  position: relative;
  width: 8px;
  height: 8px;
  flex: none;
  border-radius: 2px;
  background: ${(p) => (p.$on ? '#0f5fa8' : '#f1f1f1')};
  border: 1px solid ${(p) => (p.$on ? '#0f5fa8' : p.$off ? '#d8d8d8' : '#888')};

  &::after {
    content: '';
    display: ${(p) => (p.$on ? 'block' : 'none')};
    position: absolute;
    left: 1.5px;
    top: 0;
    width: 2.5px;
    height: 4.5px;
    border: solid #fff;
    border-width: 0 1px 1px 0;
    transform: rotate(40deg);
  }
`;

const DefaultRow = styled.div`
  height: 14px;
  display: flex;
  align-items: center;
  gap: 7px;
  margin-top: 1px;
  padding-left: 13px;
`;

const PushButton = styled.span<{ $w: number }>`
  width: ${(p) => p.$w}px;
  height: 14px;
  flex: none;
  border-radius: 2px;
  background: #fbfbfb;
  box-shadow: 0 0 1px rgba(0, 0, 0, 0.4);
  line-height: 14px;
  text-align: center;
  white-space: nowrap;
`;

const RadioRow = styled.div`
  height: 14px;
  display: flex;
  align-items: center;
  margin-top: 9px;
`;

const Radio = styled.span<{ $on?: boolean }>`
  width: 9px;
  height: 9px;
  flex: none;
  border-radius: 50%;
  background: #f7f7f7;
  border: ${(p) => (p.$on ? '3px solid #0f5fa8' : '1px solid #777')};
`;

const RadioLabel = styled.span<{ $w: number }>`
  width: ${(p) => p.$w}px;
  flex: none;
  padding-left: 1px;
  white-space: nowrap;
`;

const FocusLabel = styled.span`
  outline: 1px dotted #555;
  padding: 0 0 0 1px;
  line-height: 9px;
`;

const DialogRule = styled.div`
  height: 1px;
  margin-top: 6px;
  background: #e2e2e2;
`;

const DialogFooter = styled.div`
  display: flex;
  gap: 9px;
  margin-top: 10px;
  padding: 0 6px;
`;

const Pointer = styled.svg`
  position: absolute;
  left: 16px;
  top: 341px;
`;

export default App;
